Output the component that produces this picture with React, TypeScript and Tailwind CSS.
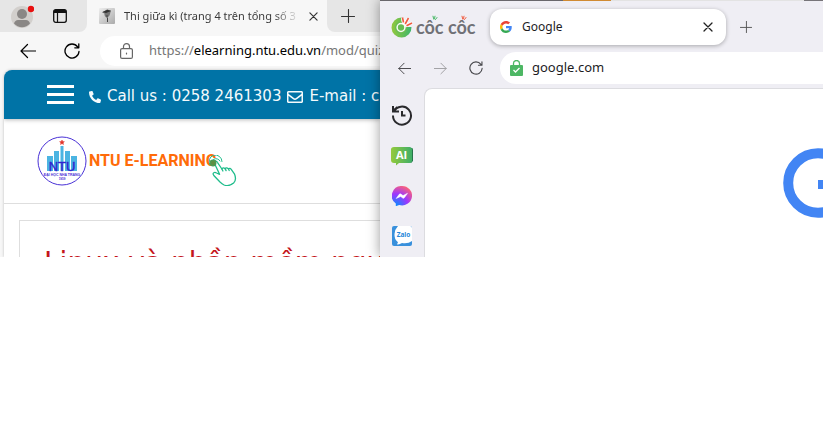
import React from "react";
import { FaPhone, FaRegEnvelope } from "react-icons/fa";

const stroke = { fill: "none", stroke: "currentColor", strokeLinecap: "round", strokeLinejoin: "round" } as const;

function ArrowLeft({ className = "" }: { className?: string }) {
  return (
    <svg viewBox="0 0 16 16" className={className} {...stroke} strokeWidth="1.2">
      <path d="M15.5 8H1M7.5 1.5 1 8l6.5 6.5" />
    </svg>
  );
}

function Reload({ className = "" }: { className?: string }) {
  return (
    <svg viewBox="0 0 16 16" className={className} {...stroke} strokeWidth="1.3">
      <path d="M15 8.5A7 7 0 1 1 13.6 3.8M14.8.8v4h-4" />
    </svg>
  );
}

function Plus({ className = "" }: { className?: string }) {
  return (
    <svg viewBox="0 0 14 14" className={className} {...stroke} strokeWidth="1.1">
      <path d="M7.5 .5v13M.5 7.5h13" />
    </svg>
  );
}

function Close({ className = "" }: { className?: string }) {
  return (
    <svg viewBox="0 0 10 10" className={className} {...stroke} strokeWidth="1.3">
      <path d="m1 1 8 8M9 1 1 9" />
    </svg>
  );
}

function Avatar() {
  return (
    <svg viewBox="0 0 24 24" className="size-6">
      <circle cx="12" cy="13" r="11" fill="#d2cfcc" />
      <circle cx="12" cy="10" r="5" fill="#8a8785" />
      <path d="M4 19.5Q5 16 8 16h8q3 0 4 3.5a10.5 10.5 0 0 1-16 0Z" fill="#8a8785" />
      <circle cx="21" cy="5" r="3.2" fill="#e81010" />
    </svg>
  );
}

function TabActions() {
  return (
    <svg viewBox="0 0 14 14" className="size-3.5">
      <rect x=".7" y=".7" width="12.6" height="12.6" rx="2" fill="none" stroke="#111" strokeWidth="1.3" />
      <path d="M.7 2.5Q.7.7 2.5.7h9q1.8 0 1.8 1.8V4H.7Z" fill="#111" />
      <path d="M4.5 4v9" stroke="#111" strokeWidth="1.2" />
    </svg>
  );
}

function QuizIcon() {
  return (
    <svg viewBox="0 0 16 16" className="size-4 shrink-0">
      <defs>
        <linearGradient id="quiz" x2="1" y2="1">
          <stop stopColor="#eee" />
          <stop offset="1" stopColor="#aaa" />
        </linearGradient>
      </defs>
      <rect width="16" height="16" rx="1" fill="url(#quiz)" />
      <path d="m3 4.5 5-3 4 1-1 3.5q-.3 2-2 3V14H8v-4Q5 8 5.500 5.500Z" fill="#777" />
      <path d="m3.500 4 5-2.200L12 3 7 5Z" fill="#333" />
      <path d="M7 8h2M8.500 10v4" stroke="#444" />
    </svg>
  );
}

function NtuSeal() {
  return (
    <svg viewBox="0 0 50 50" className="size-[50px]">
      <circle cx="25" cy="25" r="24" fill="#fff" stroke="#4a32d6" strokeWidth="1" />
      <path d="m25 4 .7 1.600 1.700.1-1.300 1.100.4 1.700L25 7.600l-1.500.9.4-1.700-1.300-1.100 1.700-.1Z" fill="#e23127" stroke="#e23127" strokeWidth=".5" />
      <path d="M10 20h6v15h-6zM17 15h5v20h-5zM23.500 10h3v25h-3zM28 15h5v20h-5zM34 20h6v15h-6z" fill="#4bb4e2" />
      <text x="25" y="34.500" textAnchor="middle" fontFamily="Liberation Sans, sans-serif" fontSize="13" stroke="#3223d0" strokeWidth=".4" fill="#3223d0">NTU</text>
      <text x="25" y="39.500" textAnchor="middle" fontFamily="Liberation Sans, sans-serif" fontWeight="700" fontSize="3.500" fill="#4a32d6">ĐẠI HỌC NHA TRANG</text>
      <text x="25" y="44" textAnchor="middle" fontFamily="Liberation Sans, sans-serif" fontWeight="700" fontSize="3" fill="#4a32d6">1959</text>
    </svg>
  );
}

function Hand() {
  return (
    <svg viewBox="0 0 28 31" className="size-full" {...stroke} stroke="#20bd8c" strokeWidth="1.300">
      <path d="M11 27 4.800 20.500Q3.400 18.500 4.800 17.700q1.200-.7 2.800.3l3 1.300L5.500 8.500Q5 6.600 6.500 6.200q1.200-.3 1.900 1.100l4.500 6.700q1-2 3.200-.4 1.200-1.600 3.300.2 1.600-1.200 3 .8l3 4.200q2.500 6-.8 9.200-4.500 3.800-9.500 2-2-1-4.100-3Z" />
      <path d="m12.900 14 1 2M16.100 13.600l1 2M19.400 13.800l.8 1.700" />
      <path d="M3 10.500A4.500 4.500 0 1 1 11 6M1 10A6.500 6.500 0 1 1 13 6.500" strokeWidth="1" />
      <circle cx="4" cy="8" r="2.800" fill="#5f8f42" stroke="#4a9b55" />
    </svg>
  );
}

function CocCocMark() {
  return (
    <svg viewBox="0 0 22 22" className="size-[22px]">
      <defs>
        <linearGradient id="coc" x2="1">
          <stop stopColor="#93c83d" />
          <stop offset="1" stopColor="#3db66b" />
        </linearGradient>
      </defs>
      <path d="M10.500 1.500A10 10 0 1 0 20.500 11H14.500a4.500 4.500 0 1 1-4-4.500Z" fill="url(#coc)" />
      <circle cx="10" cy="11.500" r="6" fill="#69bd51" />
      <circle cx="10" cy="11.500" r="3.900" fill="none" stroke="#f7faf3" strokeWidth="1.500" />
      <path d="m11.500 2 1.300 6M17.500 2l-4 7M21 7l-7 3" stroke="#fff" strokeWidth="3" />
      <path d="m11.500 1.500 1 5M17.500 2l-3.300 6M21 7l-5.500 2.700" stroke="#f15b40" strokeWidth="1.600" />
    </svg>
  );
}

function Sparks({ className }: { className: string }) {
  return (
    <svg viewBox="0 0 6 5" className={className} {...stroke} strokeWidth="1">
      <path d="m1 .7.800 3M3 .7 2.500 3M5 2 3.500 4" />
    </svg>
  );
}

function GoogleG() {
  return (
    <svg viewBox="0 0 48 48" className="size-3 shrink-0">
      <path fill="#EA4335" d="M24 9.500c3.540 0 6.710 1.220 9.210 3.600l6.850-6.850C35.900 2.380 30.470 0 24 0 14.620 0 6.510 5.380 2.560 13.220l7.980 6.190C12.430 13.720 17.740 9.500 24 9.500z" />
      <path fill="#4285F4" d="M46.980 24.550c0-1.570-.15-3.090-.38-4.550H24v9.020h12.940c-.58 2.960-2.260 5.480-4.780 7.180l7.730 6c4.510-4.180 7.090-10.360 7.090-17.650z" />
      <path fill="#FBBC05" d="M10.530 28.590c-.48-1.450-.76-2.990-.76-4.590s.27-3.140.76-4.590l-7.980-6.190C.92 16.460 0 20.120 0 24s.92 7.540 2.560 10.780l7.970-6.190z" />
      <path fill="#34A853" d="M24 48c6.480 0 11.930-2.130 15.890-5.810l-7.730-6c-2.150 1.450-4.920 2.300-8.160 2.300-6.260 0-11.570-4.220-13.470-9.910l-7.980 6.190C6.510 42.620 14.620 48 24 48z" />
    </svg>
  );
}

function HistoryIcon() {
  return (
    <svg viewBox="0 0 22 22" className="size-[22px]" fill="none" stroke="#29292c" strokeWidth="2">
      <path d="M3 7.500a9 9 0 1 1-1 4M2 2v5.500h6M11 7v4.500h3.500M3 6l3.500-3" />
    </svg>
  );
}

function AiIcon() {
  return (
    <svg viewBox="0 0 22 20" className="h-5 w-[22px]">
      <defs>
        <linearGradient id="ai" x2="1">
          <stop stopColor="#94ca3c" />
          <stop offset="1" stopColor="#3fae68" />
        </linearGradient>
      </defs>
      <path d="M3 2h18q1 0 1 2v11l-2 2Z" fill="#27744a" />
      <path d="M3 1h15.500q2.500 0 2.500 2.500v11q0 2.500-2.500 2.500H8l-3 2.500V17H3q-3 0-3-3V3.500Q0 1 3 1Z" fill="url(#ai)" />
      <text x="10.500" y="12.500" textAnchor="middle" fontFamily="Open Sans, sans-serif" fontSize="11" fontWeight="700" fill="#fff">AI</text>
    </svg>
  );
}

function MessengerIcon() {
  return (
    <svg viewBox="0 0 20 20" className="size-5">
      <defs>
        <radialGradient id="msg" cx=".2" cy="1" r="1.100">
          <stop stopColor="#0090ff" />
          <stop offset=".55" stopColor="#9d36ff" />
          <stop offset="1" stopColor="#ff6474" />
        </radialGradient>
      </defs>
      <path d="M10 0a10 9.700 0 1 1-2.800 19L3.800 20.200V17.500A9.700 9.700 0 0 1 10 0Z" fill="url(#msg)" />
      <path d="m4.200 12.500 3-4.200q.8-1 1.800-.2l2 1.500 4.500-2.300-3 4.300q-.8 1.200-1.800.4l-2-1.500Z" fill="#fff" stroke="#fff" strokeWidth=".5" />
    </svg>
  );
}

function ZaloIcon() {
  return (
    <svg viewBox="0 0 20 20" className="size-5">
      <rect width="20" height="20" rx="2" fill="#3990dc" />
      <path d="M6 0h12q2 0 2 2v13q-4 3-10 2-3 2-5 1.300l1-2Q2 13 2.500 8 3 3 6 0Z" fill="#fff" />
      <text x="11.500" y="11" textAnchor="middle" fontFamily="Open Sans, sans-serif" fontSize="6.500" fontWeight="700" fill="#2486d8">Zalo</text>
    </svg>
  );
}

function EdgeWindow() {
  return (
    <section className="flex w-[380px] shrink-0 flex-col bg-[#f7f7f7] font-['Noto_Sans',sans-serif]">
      <div className="flex h-8 shrink-0 bg-[#f7f7f7]">
        <div className="flex w-[87px] items-center rounded-br-lg bg-[#e6e6e6] pl-2.5">
          <button aria-label="Profile"><Avatar /></button>
          <button aria-label="Tab actions" className="ml-[19px]"><TabActions /></button>
        </div>
        <div className="flex w-60 items-center gap-[9px] bg-[#f7f7f7] pl-3">
          <QuizIcon />
          <span className="w-[176px] shrink-0 overflow-hidden whitespace-nowrap mask-r-from-85% text-[11px] text-[#3b3b3b]">Thi giữa kì (trang 4 trên tổng số 3</span>
          <button aria-label="Close tab"><Close className="size-[9px] text-[#333]" /></button>
        </div>
        <div className="flex flex-1 items-center rounded-bl-lg bg-[#e6e6e6] pl-3.5">
          <button aria-label="New tab"><Plus className="size-3.5 text-[#333]" /></button>
        </div>
      </div>
      <div className="flex h-[38px] shrink-0 items-center pl-5">
        <button aria-label="Back"><ArrowLeft className="size-4 text-black" /></button>
        <button aria-label="Refresh" className="ml-7"><Reload className="size-4 text-black" /></button>
        <div className="ml-5 flex h-[30px] min-w-0 flex-1 items-center gap-4 rounded-l-full bg-white pl-5">
          <svg viewBox="0 0 13 16" className="h-4 w-[13px] shrink-0" {...stroke} stroke="#666" strokeWidth="1.200">
            <rect x=".6" y="5.600" width="11.800" height="9.800" rx="1.500" />
            <path d="M3.500 5.500V3.600a3 3 0 0 1 6 0v1.900M6.500 10v1" />
          </svg>
          <div role="textbox" aria-label="Address" contentEditable suppressContentEditableWarning className="min-w-0 flex-1 overflow-hidden whitespace-nowrap text-[13px] text-[#767676]">
            https://<span className="text-black">elearning.ntu.edu.vn</span>/mod/quiz
          </div>
        </div>
      </div>
      <main className="ml-1 flex flex-1 flex-col overflow-hidden rounded-tl-lg bg-white shadow-[0_0_3px_#bbb]">
        <header className="flex h-[49px] shrink-0 items-center gap-[15px] bg-[#0073a6] pl-[43px] shadow-[0_1px_4px_#bbb]">
          <button aria-label="Menu" className="flex w-[27px] shrink-0 flex-col gap-[5px]">
            <span className="h-[3px] bg-white" />
            <span className="h-[3px] bg-white" />
            <span className="h-[3px] bg-white" />
          </button>
          <p className="flex items-center gap-1.5 whitespace-nowrap pt-1 font-['DejaVu_Sans',sans-serif] text-[15px] text-[#f4fafc]">
            <FaPhone className="size-3 -scale-x-100" /> Call us : 0258 2461303
            <FaRegEnvelope className="size-4" /> E-mail : c
          </p>
        </header>
        <div className="flex h-[85px] shrink-0 items-center border-b border-[#dedede] pl-[33px]">
          <a href="#" className="relative flex items-center gap-0.5">
            <NtuSeal />
            <span className="whitespace-nowrap font-['Roboto',sans-serif] text-base leading-[50px] font-bold text-[#ff6b08]">NTU E-LEARNING</span>
            <span className="absolute -right-5 bottom-0 h-[31px] w-7"><Hand /></span>
          </a>
        </div>
        <article className="ml-[15px] mt-4 flex-1 border-l border-t border-[#dedede] pl-6 pt-[21px]">
          <h1 className="whitespace-nowrap font-['DejaVu_Sans',sans-serif] text-[28px] text-[#c4161c]">Linux và phần mềm nguồ</h1>
        </article>
      </main>
    </section>
  );
}

function CocCocWindow() {
  return (
    <section className="relative z-10 flex min-w-0 flex-1 flex-col bg-[#efeef4] font-['Noto_Sans',sans-serif] shadow-[0_0_12px_rgba(0,0,0,0.4)]">
      <div className="flex h-px shrink-0 bg-[#e3e3e3]">
        <span className="w-[183px] bg-[#69676c]" />
        <span className="w-12 bg-[#d08a32]" />
        <span className="ml-auto w-[19px] bg-[#777579]" />
      </div>
      <div className="flex h-[51px] shrink-0 items-center pl-[11px]">
        <div className="flex w-[99px] shrink-0 items-center gap-[3px]">
          <CocCocMark />
          <span className="relative whitespace-nowrap font-['Lato',sans-serif] text-lg leading-6 font-bold text-[#707176]">
            côc côc
            <Sparks className="absolute left-4 top-0 h-1.5 w-1.5 text-[#48b866]" />
            <Sparks className="absolute right-2 top-0 h-1.5 w-1.5 text-[#f15b40]" />
          </span>
        </div>
        <div className="flex h-9 w-[236px] shrink-0 items-center gap-2.5 rounded-xl bg-white pl-2.5 pr-[13px] shadow-[0_1px_4px_rgba(0,0,0,0.3)]">
          <GoogleG />
          <span className="flex-1 text-xs text-[#1d1d1f]">Google</span>
          <button aria-label="Close tab"><Close className="size-2.5 text-[#222]" /></button>
        </div>
        <button aria-label="New tab" className="ml-3.5"><Plus className="size-3 text-[#555]" /></button>
      </div>
      <div className="flex h-8 shrink-0 items-center pl-[18px]">
        <button aria-label="Back"><ArrowLeft className="size-[13px] text-[#48484c]" /></button>
        <button aria-label="Forward" className="ml-[23px]"><ArrowLeft className="size-[13px] -scale-x-100 text-[#a0a0a4]" /></button>
        <button aria-label="Reload" className="ml-[22px]"><Reload className="size-3.5 text-[#48484c]" /></button>
        <div className="ml-[17px] flex h-8 min-w-0 flex-1 items-center gap-[9px] rounded-l-full bg-white pl-2.5">
          <svg viewBox="0 0 13 16" className="h-4 w-[13px] shrink-0" fill="none">
            <path d="M3.500 6V3.500a3 3 0 0 1 6 0V6" stroke="#4db764" strokeWidth="1.300" />
            <rect y="5" width="13" height="11" rx="1" fill="#4db764" />
            <path d="m3.500 10 2 2 4-4" stroke="#fff" strokeWidth="1.300" />
          </svg>
          <input aria-label="Address" defaultValue="google.com" className="min-w-0 flex-1 bg-transparent text-[13px] text-[#1d1d1f] outline-none" />
        </div>
      </div>
      <div className="flex flex-1 pt-1">
        <nav className="flex w-11 shrink-0 flex-col items-center gap-5 pt-4">
          <button aria-label="History"><HistoryIcon /></button>
          <button aria-label="AI chat"><AiIcon /></button>
          <button aria-label="Messenger"><MessengerIcon /></button>
          <button aria-label="Zalo"><ZaloIcon /></button>
        </nav>
        <main className="flex flex-1 items-start justify-end overflow-hidden rounded-tl-lg border-l border-t border-[#dcdce0] bg-white pt-[59px]">
          <svg role="img" aria-label="Google" viewBox="0 0 40 70" className="h-[70px] w-10">
            <circle cx="35" cy="35" r="29.800" fill="none" stroke="#4285f4" strokeWidth="10" />
            <path d="M35 32h5v9h-5z" fill="#4285f4" />
          </svg>
        </main>
      </div>
    </section>
  );
}

export default function App() {
  return (
    <div className="min-h-screen bg-white">
      <div className="flex h-[257px] overflow-hidden">
        <EdgeWindow />
        <CocCocWindow />
      </div>
    </div>
  );
}
